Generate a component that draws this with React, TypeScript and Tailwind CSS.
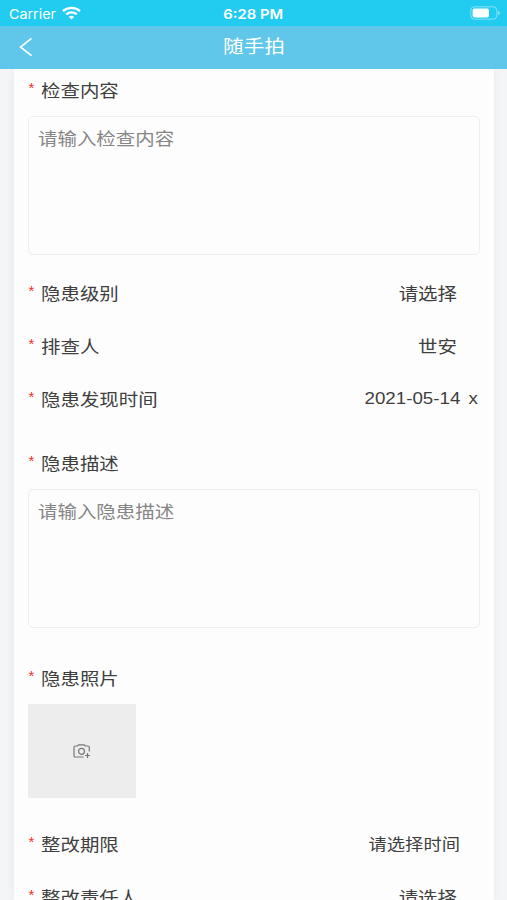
import type { ReactNode } from "react";

const Label = ({ children }: { children: ReactNode }) => (
  <div className="flex h-6 items-center text-[17px] leading-6 text-[#3f3f3f]">
    <span className="-mt-1 h-6 w-[13px] pl-[0.5px] font-['Liberation_Sans',sans-serif] text-[15px] leading-6 text-[#f0302c]">
      *
    </span>
    <span className="origin-left translate-y-[0.5px] scale-x-[1.144] whitespace-nowrap">{children}</span>
  </div>
);

const Field = ({ label, children }: { label: string; children?: ReactNode }) => (
  <div className="flex h-6 items-center justify-between">
    <Label>{label}</Label>
    {children}
  </div>
);

const Value = ({ children }: { children: ReactNode }) => (
  <span className="mr-[23px] origin-right translate-y-[0.5px] scale-x-[1.144] text-[17px] leading-6 whitespace-nowrap text-[#3f3f3f]">
    {children}
  </span>
);

const TextBox = ({ placeholder }: { placeholder: string }) => (
  <div className="h-[139px] rounded-[5px] border border-[#efeff1] px-[9px] pt-[10px] text-[17px] leading-6 text-[#868686]">
    <span className="inline-block origin-left scale-x-[1.144] whitespace-nowrap">
      {placeholder}
    </span>
  </div>
);

function StatusBar() {
  return (
    <div className="grid h-[26px] shrink-0 grid-cols-3 items-center bg-[#22cbf0] pt-px text-white">
      <div className="flex items-center pl-[9px]">
        <span className="w-[47px] text-[13px] leading-4">
          <span className="inline-block origin-left scale-x-[1.1]">Carrier</span>
        </span>
        <svg width="19" height="14" viewBox="0 0 19 14" className="mb-px ml-[6px]" fill="none" stroke="currentColor" strokeWidth="2.3">
          <path d="M1 5.2C5.7.8 13.3.8 18 5.2" />
          <path d="M4.2 8.4c3-2.7 7.6-2.7 10.6 0" />
          <path d="M6.8 10.7c1.600-1.300 3.800-1.300 5.400 0L9.500 13.500z" fill="currentColor" stroke="none" />
        </svg>
      </div>
      <div className="text-center text-[13px] leading-4 font-semibold">
        <span className="inline-block scale-x-[1.14]">6:28 PM</span>
      </div>
      <div className="flex justify-end pr-[7px]">
        <svg width="30" height="14" viewBox="0 0 30 14" className="mb-px" fill="none">
          <rect x="0.8" y="0.8" width="26" height="12.4" rx="3.5" stroke="#fff" strokeOpacity=".45" />
          <rect x="2.6" y="2.6" width="16.4" height="8.8" rx="2" fill="#fff" />
          <path d="M28 5v4c1.200-.3 1.800-1 1.800-2S29.200 5.300 28 5z" fill="#fff" fillOpacity=".5" />
        </svg>
      </div>
    </div>
  );
}

function NavBar() {
  return (
    <div className="relative z-10 grid h-[43px] shrink-0 grid-cols-[60px_1fr_60px] items-center bg-[#60c6ea] text-white">
      <svg width="14" height="20" viewBox="0 0 14 20" className="mb-px ml-[19px]" fill="none" stroke="currentColor" strokeWidth="1.7">
        <path d="M12.500 1.300 1.500 10l11 8.700" />
      </svg>
      <h1 className="pb-px text-center text-[18px] leading-6">
        <span className="inline-block scale-x-[1.144]">随手拍</span>
      </h1>
    </div>
  );
}

export default function App() {
  return (
    <div className="flex h-[900px] w-full flex-col overflow-hidden bg-[#f3f5f6] font-['Inter','Noto_Sans_CJK_SC',sans-serif]">
      <StatusBar />
      <NavBar />
      <main className="mr-[13px] ml-[14px] h-[831px] shrink-0 overflow-hidden bg-[#fdfdfd] pt-[9px] pr-[14px] pl-[14px] shadow-[0_0_8px_#e6eaed]">
        <Label>检查内容</Label>
        <div className="mt-[14px]">
          <TextBox placeholder="请输入检查内容" />
        </div>

        <div className="mt-[26px] flex flex-col gap-[29px]">
          <Field label="隐患级别">
            <Value>请选择</Value>
          </Field>
          <Field label="排查人">
            <Value>世安</Value>
          </Field>
          <Field label="隐患发现时间">
            <span className="mr-[2px] flex origin-right scale-x-[1.17] gap-[7px] font-['Liberation_Sans',sans-serif] text-[16px] leading-6 text-[#3f3f3f]">
              <span>2021-05-14</span>
              <span>x</span>
            </span>
          </Field>
        </div>

        <div className="mt-10">
          <Label>隐患描述</Label>
        </div>
        <div className="mt-[14px]">
          <TextBox placeholder="请输入隐患描述" />
        </div>

        <div className="mt-[38px]">
          <Label>隐患照片</Label>
        </div>
        <div className="mt-[14px] flex h-[94px] w-[108px] items-center justify-center bg-[#ededed]">
          <svg width="18" height="15" viewBox="0 0 18 15" fill="none" stroke="#777" strokeWidth="1.2">
            <path d="M10.500 13H2.300Q1 13 1 11.700V3.300Q1 2 2.300 2H4.600L5.600.8H11.200L12.200 2H15Q16.300 2 16.300 3.300V7.500" />
            <circle cx="8.500" cy="7.300" r="3" />
            <path d="M14.500 9v5M12 11.500h5" />
          </svg>
        </div>

        <div className="mt-[34px] flex flex-col gap-[29px]">
          <Field label="整改期限">
            <span className="mr-[20px] origin-right scale-x-[1.144] text-[16px] leading-6 text-[#3f3f3f]">
              请选择时间
            </span>
          </Field>
          <Field label="整改责任人">
            <Value>请选择</Value>
          </Field>
        </div>
      </main>
    </div>
  );
}
